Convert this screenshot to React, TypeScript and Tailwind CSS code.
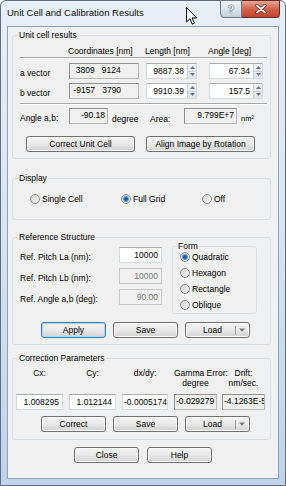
import type { ReactNode } from 'react'

const font = { fontFamily: '"Liberation Sans", Arial, sans-serif' }

function Btn({ children, w, def }: { children: ReactNode; w: string; def?: boolean }) {
  return (
    <div
      className={`flex h-[16px] items-center justify-center rounded-[3px] border bg-linear-to-b from-[#f4f4f4] via-[#e9e9e9] to-[#d2d2d2] leading-[10px] text-black ${w} ${
        def ? 'border-[#3c7fb1] shadow-[inset_0_0_0_1px_#a6d7f5]' : 'border-[#707070] shadow-[inset_0_0_0_1px_#fbfbfb]'
      }`}
    >
      {children}
    </div>
  )
}

function SplitBtn() {
  return (
    <div className="flex h-[16px] w-[65px] items-center rounded-[3px] border border-[#707070] bg-linear-to-b from-[#f4f4f4] via-[#e9e9e9] to-[#d2d2d2] leading-[10px] shadow-[inset_0_0_0_1px_#fbfbfb]">
      <span className="flex-1 pl-[4px] text-center">Load</span>
      <span className="h-[9px] w-px bg-[#9a9a9a]" />
      <svg width="12" height="6" viewBox="0 0 12 6" className="mr-[1px]">
        <path d="M3 1.5h6L6 4.8z" fill="#7a7a7a" />
      </svg>
    </div>
  )
}

function Spin() {
  return (
    <div className="flex h-full w-[9px] flex-col border-l border-[#c3cfdc] bg-linear-to-b from-[#f2f5f8] to-[#dfe5eb]">
      <div className="flex flex-1 items-center justify-center border-b border-[#c3cfdc]">
        <svg width="5" height="3" viewBox="0 0 5 3">
          <path d="M0 3h5L2.5 0z" fill="#6a7584" />
        </svg>
      </div>
      <div className="flex flex-1 items-center justify-center">
        <svg width="5" height="3" viewBox="0 0 5 3">
          <path d="M0 0h5L2.5 3z" fill="#6a7584" />
        </svg>
      </div>
    </div>
  )
}

function Field({ value, w, spin, disabled, left }: { value: string; w: string; spin?: boolean; disabled?: boolean; left?: boolean }) {
  return (
    <div
      className={`flex h-[16px] items-stretch overflow-hidden border ${w} ${
        disabled
          ? 'border-[#c9c9c9] bg-[#f0f0f0] text-[#7a7a7a]'
          : 'border-[#d3d9e2] border-t-[#abadb3] bg-white text-black'
      }`}
    >
      <span className={`flex flex-1 items-center overflow-hidden whitespace-nowrap leading-[10px] ${left ? 'justify-start pl-[1px]' : 'justify-end pr-[3px]'}`}>
        {value}
      </span>
      {spin && <Spin />}
    </div>
  )
}

function Static({ children, w, right }: { children: ReactNode; w: string; right?: boolean }) {
  return (
    <div
      className={`h-[16px] overflow-hidden whitespace-pre border border-[#b9b9b9] border-l-[#8f8f8f] border-t-[#8f8f8f] bg-[#f0f0f0] pt-[1px] leading-[10px] ${w} ${
        right ? 'pr-[2px] text-right' : 'pl-[1px]'
      }`}
    >
      {children}
    </div>
  )
}

function Radio({ label, on }: { label: string; on?: boolean }) {
  return (
    <div className="flex items-center leading-[10px]">
      <span className="flex h-[10px] w-[10px] items-center justify-center rounded-full border border-[#8e8f8f] bg-linear-to-br from-[#d0d0d0] to-[#f8f8f8]">
        {on && <span className="h-[4px] w-[4px] rounded-full bg-[#1a5fa8] shadow-[0_0_0_1px_#5ea1dc]" />}
      </span>
      <span className="ml-[2px]">{label}</span>
    </div>
  )
}

export default function App() {
  return (
    <div className="relative h-[486px] w-[286px] bg-white text-[8.5px] text-black" style={font}>
      <div className="flex h-[486px] w-[286px] flex-col rounded-t-[6px] border border-[#5d6f86] bg-linear-to-b from-[#e9eff7] via-[#d6e3f1] to-[#bfd3ea] pb-[6px]">
        {/* Title bar */}
        <div className="flex h-[25px] items-start">
          <span className="pl-[6px] pt-[6px] text-[9.5px] leading-[11px] text-[#111]">Unit Cell and Calibration Results</span>
          <div className="ml-auto mr-[5px] -mt-px flex">
            <div className="flex h-[18px] w-[22px] items-center justify-center rounded-bl-[4px] border border-[#6d7a8c] bg-linear-to-b from-[#f1f4f8] via-[#dbe2ea] to-[#c3cdd9] text-[10px] font-bold text-[#f4f6f9] [text-shadow:0_0_1px_#38414d,0_0_1px_#38414d]">
              ?
            </div>
            <div className="flex h-[18px] w-[38px] items-center justify-center rounded-br-[4px] border border-l-0 border-[#6a2a22] bg-linear-to-b from-[#e8a595] via-[#d2624b] to-[#c2452d]">
              <svg width="12" height="10" viewBox="0 0 12 10">
                <path d="M2 1.5l8 7M10 1.5l-8 7" stroke="#5a1d14" strokeWidth="3.2" strokeLinecap="round" />
                <path d="M2 1.5l8 7M10 1.5l-8 7" stroke="#fff" strokeWidth="1.8" strokeLinecap="round" />
              </svg>
            </div>
          </div>
        </div>

        {/* Client area */}
        <div className="mx-[6px] flex-1 border border-[#8fa2b9] bg-[#f0f0f0]">
          {/* Unit cell results */}
          <fieldset className="ml-[4px] mr-[7px] mt-[3px] rounded-[3px] border border-[#d5dfe5] pb-[6px]">
            <legend className="ml-[5px] px-[1px] leading-[10px]">Unit cell results</legend>
            <div className="mt-[6px] flex leading-[10px]">
              <span className="ml-[55px] w-[77px]">Coordinates [nm]</span>
              <span className="w-[63px]">Length [nm]</span>
              <span>Angle [deg]</span>
            </div>
            <div className="ml-[7px] mr-[3px] mt-[1px] h-px bg-[#a9a9a9] shadow-[0_1px_0_#fff]" />
            <div className="mt-[5px] flex h-[16px] items-end">
              <span className="w-[56px] pb-[1px] pl-[7px] leading-[10px]">a vector</span>
              <Static w="w-[70px]">{'  3809   9124'}</Static>
              <div className="ml-[7px]"><Field value="9887.38" w="w-[51px]" spin /></div>
              <div className="ml-[12px]"><Field value="67.34" w="w-[54px]" spin /></div>
            </div>
            <div className="mt-[4px] flex h-[16px] items-end">
              <span className="w-[56px] pb-[1px] pl-[7px] leading-[10px]">b vector</span>
              <Static w="w-[70px]">{' -9157   3790'}</Static>
              <div className="ml-[7px]"><Field value="9910.39" w="w-[51px]" spin /></div>
              <div className="ml-[12px]"><Field value="157.5" w="w-[54px]" spin /></div>
            </div>
            <div className="ml-[7px] mr-[3px] mt-[4px] h-px bg-[#a9a9a9] shadow-[0_1px_0_#fff]" />
            <div className="mt-[4px] flex h-[16px] items-end leading-[10px]">
              <span className="w-[56px] pb-[1px] pl-[7px]">Angle a,b:</span>
              <Static w="w-[39px]" right>-90.18</Static>
              <span className="ml-[4px] w-[38px]">degree</span>
              <span className="w-[34px]">Area:</span>
              <Static w="w-[53px]" right>9.799E+7</Static>
              <span className="ml-[4px] text-[7.5px]">nm²</span>
            </div>
            <div className="mt-[12px] flex pl-[13px]">
              <Btn w="w-[109px]">Correct Unit Cell</Btn>
              <div className="ml-[11px]"><Btn w="w-[109px]">Align Image by Rotation</Btn></div>
            </div>
          </fieldset>

          {/* Display */}
          <fieldset className="ml-[4px] mr-[7px] mt-[14px] rounded-[3px] border border-[#d5dfe5] pb-[15px]">
            <legend className="ml-[5px] px-[1px] leading-[10px]">Display</legend>
            <div className="mt-[11px] flex pl-[17px]">
              <div className="w-[91px]"><Radio label="Single Cell" /></div>
              <div className="w-[81px]"><Radio label="Full Grid" on /></div>
              <Radio label="Off" />
            </div>
          </fieldset>

          {/* Reference Structure */}
          <fieldset className="ml-[4px] mr-[7px] mt-[12px] rounded-[3px] border border-[#d5dfe5] pb-[6px]">
            <legend className="ml-[5px] px-[1px] leading-[10px]">Reference Structure</legend>
            <div className="flex">
              <div className="flex w-[159px] flex-col gap-[5px] pt-[5px]">
                <div className="flex h-[16px] items-end">
                  <span className="w-[106px] pb-[1px] pl-[7px] leading-[10px]">Ref. Pitch La (nm):</span>
                  <Field value="10000" w="w-[43px]" />
                </div>
                <div className="flex h-[16px] items-end">
                  <span className="w-[106px] pb-[1px] pl-[7px] leading-[10px]">Ref. Pitch Lb (nm):</span>
                  <Field value="10000" w="w-[43px]" disabled />
                </div>
                <div className="flex h-[16px] items-end">
                  <span className="w-[106px] pb-[1px] pl-[7px] leading-[10px]">Ref. Angle a,b (deg):</span>
                  <Field value="90.00" w="w-[43px]" disabled />
                </div>
              </div>
              <fieldset className="-mt-px h-[73px] w-[85px] rounded-[3px] border border-[#d5dfe5]">
                <legend className="ml-[4px] px-[1px] leading-[10px]">Form</legend>
                <div className="mt-[1px] flex flex-col gap-[6px] pl-[7px]">
                  <Radio label="Quadratic" on />
                  <Radio label="Hexagon" />
                  <Radio label="Rectangle" />
                  <Radio label="Oblique" />
                </div>
              </fieldset>
            </div>
            <div className="mt-[8px] flex gap-[7px] pl-[28px]">
              <Btn w="w-[65px]" def>Apply</Btn>
              <Btn w="w-[65px]">Save</Btn>
              <SplitBtn />
            </div>
          </fieldset>

          {/* Correction Parameters */}
          <fieldset className="ml-[4px] mr-[7px] mt-[8px] rounded-[3px] border border-[#d5dfe5] pb-[7px]">
            <legend className="ml-[5px] px-[1px] leading-[10px]">Correction Parameters</legend>
            <div className="mt-[5px] flex h-[20px] pl-[3px] text-center leading-[10px]">
              <span className="w-[47px]">Cx:</span>
              <span className="ml-[6px] w-[47px]">Cy:</span>
              <span className="ml-[6px] w-[46px]">dx/dy:</span>
              <span className="ml-[6px] w-[43px] whitespace-nowrap">Gamma Error:<br />degree</span>
              <span className="ml-[5px] w-[43px]">Drift:<br />nm/sec.</span>
            </div>
            <div className="mt-[6px] flex pl-[3px]">
              <Field value="1.008295" w="w-[47px]" />
              <div className="ml-[6px]"><Field value="1.012144" w="w-[47px]" /></div>
              <div className="ml-[6px]"><Field value="-0.0005174" w="w-[46px]" left /></div>
              <div className="ml-[6px]"><Static w="w-[43px]">-0.029279</Static></div>
              <div className="ml-[5px]"><Static w="w-[43px]">-4.1263E-5</Static></div>
            </div>
            <div className="mt-[6px] flex gap-[7px] pl-[28px]">
              <Btn w="w-[65px]">Correct</Btn>
              <Btn w="w-[65px]">Save</Btn>
              <SplitBtn />
            </div>
          </fieldset>

          <div className="mt-[7px] flex justify-center gap-[8px]">
            <Btn w="w-[65px]">Close</Btn>
            <Btn w="w-[65px]">Help</Btn>
          </div>
        </div>
      </div>

      {/* Mouse pointer */}
      <svg className="absolute left-[186px] top-[7px]" width="11" height="18" viewBox="0 0 11 18">
        <path d="M0.5 0.5v14.5l3.4-3.3 2.3 5.4 2.2-1-2.3-5.2h4.6z" fill="#fff" stroke="#000" strokeWidth="1" strokeLinejoin="round" />
      </svg>
    </div>
  )
}
